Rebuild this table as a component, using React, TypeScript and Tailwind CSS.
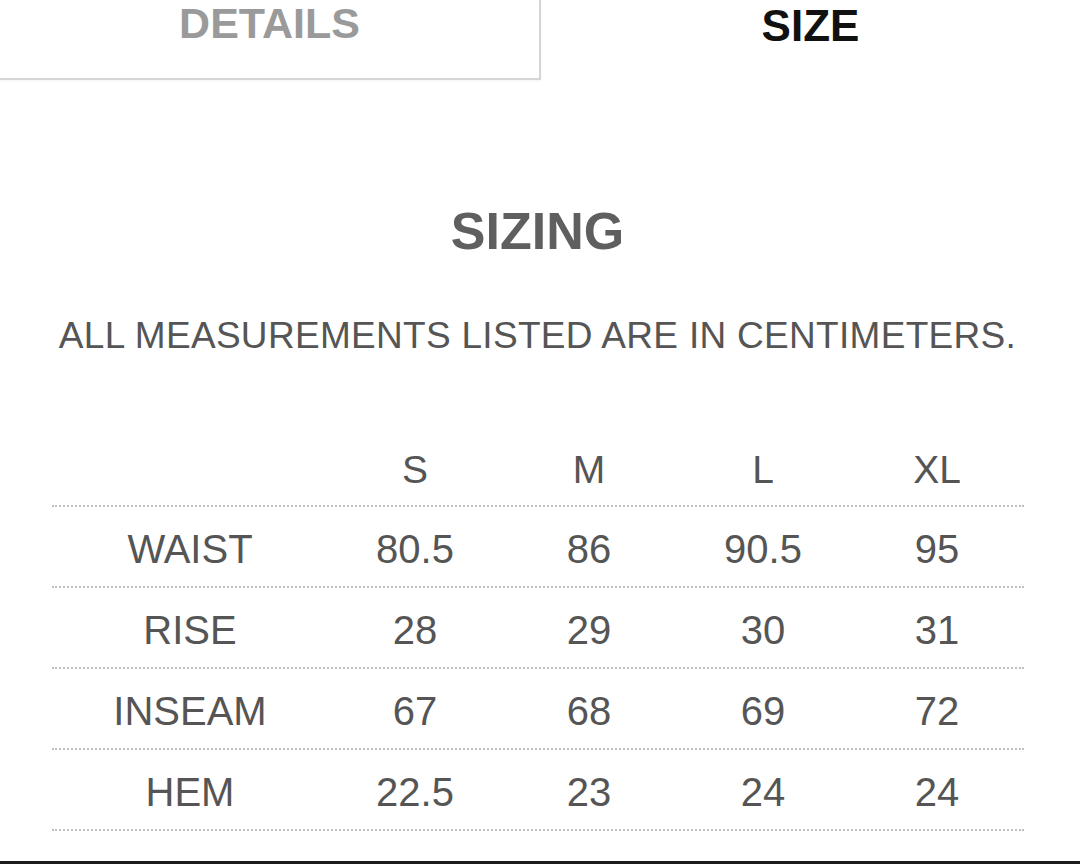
const sizes = ["S", "M", "L", "XL"];

const rows: { label: string; values: string[] }[] = [
  { label: "WAIST", values: ["80.5", "86", "90.5", "95"] },
  { label: "RISE", values: ["28", "29", "30", "31"] },
  { label: "INSEAM", values: ["67", "68", "69", "72"] },
  { label: "HEM", values: ["22.5", "23", "24", "24"] },
];

export default function App() {
  return (
    <div
      className="relative flex h-[864px] w-[1080px] flex-col overflow-hidden bg-white"
      style={{ fontFamily: '"Liberation Sans", Arial, sans-serif' }}
    >
      {/* tabs */}
      <div className="flex h-[80px]">
        <div className="flex w-[541px] justify-center border-r-2 border-b-2 border-[#d6d6d6] pt-[2px] shadow-[0_1px_2px_rgba(0,0,0,0.05)]">
          <span className="text-[43px] font-bold leading-none text-[#9a9a9a]">
            DETAILS
          </span>
        </div>
        <div className="flex flex-1 justify-center pt-[4px]">
          <span className="text-[44px] font-bold leading-none text-[#111]">
            SIZE
          </span>
        </div>
      </div>

      <h2 className="mt-[125px] pr-[5px] text-center text-[52px] font-bold leading-none text-[#5f5f5f]">
        SIZING
      </h2>
      <p className="mt-[60px] pr-[5px] text-center text-[37px] leading-none tracking-[0.3px] text-[#555]">
        ALL MEASUREMENTS LISTED ARE IN CENTIMETERS.
      </p>

      {/* table */}
      <div className="mt-[79px] ml-[52px] w-[972px] text-[#555]">
        <div className="grid h-[74px] grid-cols-[276px_repeat(4,174px)] items-center border-b-2 border-dotted border-[#c0c0c0] text-[39px] leading-none">
          <span />
          {sizes.map((s) => (
            <span key={s} className="text-center">
              {s}
            </span>
          ))}
        </div>
        {rows.map((r) => (
          <div
            key={r.label}
            className="grid h-[81px] grid-cols-[276px_repeat(4,174px)] items-center border-b-2 border-dotted border-[#c0c0c0] pt-[4px] text-[40px] leading-none"
          >
            <span className="text-center">{r.label}</span>
            {r.values.map((v, i) => (
              <span key={i} className="text-center">
                {v}
              </span>
            ))}
          </div>
        ))}
      </div>

      <div className="mt-auto h-[3px] bg-[#1c1c1c]" />
    </div>
  );
}
